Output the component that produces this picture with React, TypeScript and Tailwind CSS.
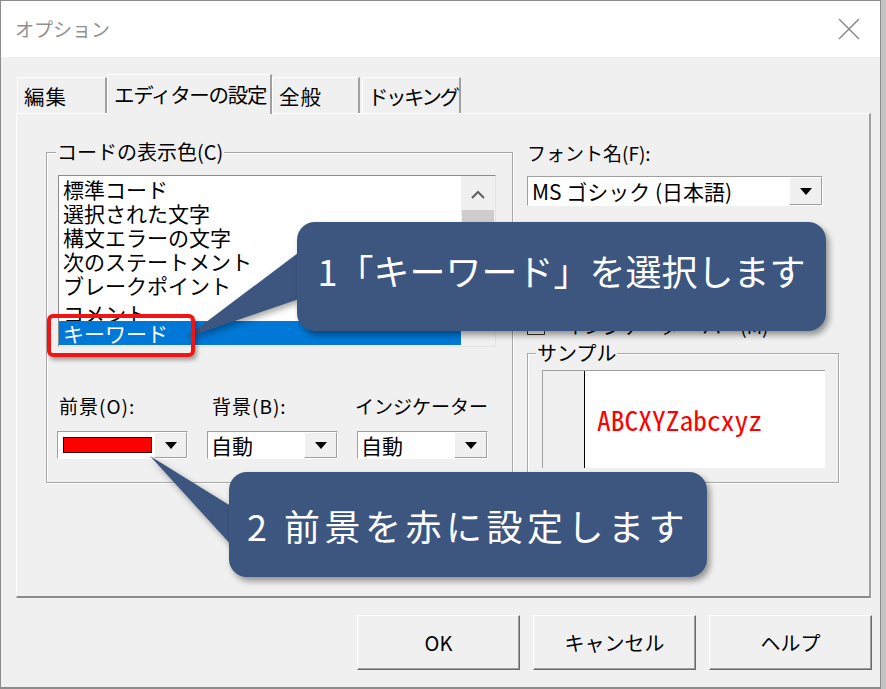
import React from "react";

const items = ["標準コード", "選択された文字", "構文エラーの文字", "次のステートメント", "ブレークポイント"];

function Triangle() {
  return (
    <svg width="12" height="7" viewBox="0 0 12 7">
      <path d="M0 0h12L6 7z" fill="#000" />
    </svg>
  );
}

function DropButton({ className = "" }: { className?: string }) {
  return (
    <div
      className={`flex items-center justify-center bg-[#f0f0f0] border border-t-white border-l-white border-r-[#a0a0a0] border-b-[#a0a0a0] ${className}`}
    >
      <Triangle />
    </div>
  );
}

function ColorSelect({ children }: { children: React.ReactNode }) {
  return (
    <div className="flex h-[28px] w-[131px] items-stretch border border-t-[#a0a0a0] border-l-[#a0a0a0] border-r-white border-b-white bg-white">
      <div className="flex flex-1 items-center pl-[3px] text-[21px] leading-[26px]">{children}</div>
      <DropButton className="w-[33px]" />
    </div>
  );
}

function Tab({ label, className }: { label: string; className: string }) {
  return (
    <div
      className={`flex items-center whitespace-nowrap bg-[#f0f0f0] border-t border-l border-t-white border-l-white border-r-2 border-r-[#a0a0a0] text-[20.5px] leading-none text-black ${className}`}
    >
      {label}
    </div>
  );
}

function WinButton({ label }: { label: string }) {
  return (
    <div className="flex h-[55px] w-[163px] items-center justify-center border border-t-white border-l-white border-r-[#696969] border-b-[#696969] bg-[#f0f0f0] shadow-[inset_-1px_-1px_0_#a0a0a0] text-[20px] text-black">
      {label}
    </div>
  );
}

export default function App() {
  return (
    <div className="relative h-[689px] w-[886px] overflow-hidden bg-[#c4c4c4] font-['Noto_Sans_CJK_JP',sans-serif] text-black">
      <div className="flex h-[689px] w-[881px] flex-col border-t border-l border-r border-b-2 border-[#8c8c8c] bg-[#f0f0f0]">
        {/* title bar */}
        <div className="flex h-[56px] items-center justify-between bg-white pl-[14px] pr-[20px]">
          <span className="text-[19px] text-[#8f8f8f]">オプション</span>
          <svg width="22" height="22" viewBox="0 0 22 22">
            <path d="M1 1L21 21M21 1L1 21" stroke="#8a8a8a" strokeWidth="1.5" />
          </svg>
        </div>

        {/* tabs */}
        <div className="mt-[17px] flex h-[39px] items-end pl-[16px]">
          <Tab label="編集" className="h-[36px] w-[90px] pl-[6px] pt-[2px] tracking-[1px]" />
          <Tab label="エディターの設定" className="relative z-10 h-[40px] -mb-px w-[165px] pl-[6px] tracking-[-1.3px]" />
          <Tab label="全般" className="h-[36px] w-[88px] pl-[6px] pt-[2px] tracking-[1px]" />
          <Tab label="ドッキング" className="ml-[2px] h-[36px] w-[99px] pl-[5px] pt-[2px] tracking-[-2.5px]" />
        </div>

        {/* panel */}
        <div className="ml-[15px] flex h-[485px] w-[855px] items-start border-t border-l border-t-white border-l-white border-r-2 border-b-2 border-r-[#a0a0a0] border-b-[#8a8a8a]">
          {/* code colour group */}
          <div className="relative ml-[29px] mt-[38px] h-[331px] w-[467px] border border-[#a8a8a8] shadow-[inset_1px_1px_0_#fff,1px_1px_0_#fff]">
            <span className="absolute -top-[13px] left-[9px] bg-[#f0f0f0] px-[1px] text-[20px] leading-[24px]">
              コードの表示色(C)
            </span>
            <div className="ml-[11px] mt-[22px] flex h-[172px] w-[438px] border border-t-[#8c8c8c] border-l-[#8c8c8c] border-r-[#e3e3e3] border-b-[#e3e3e3] bg-white">
              <div className="flex w-[402px] flex-col pt-px">
                {items.map((t) => (
                  <div key={t} className="h-[24px] pl-[4px] text-[21px] leading-[24px]">
                    {t}
                  </div>
                ))}
                <div className="h-[24px] overflow-hidden pl-[4px] pt-[4px] text-[21px] leading-[24px]">コメント</div>
                <div className="h-[24px] bg-[#0078d7] pl-[4px] text-[21px] leading-[24px] text-white">キーワード</div>
              </div>
              <div className="flex w-[34px] flex-col items-center bg-[#f0f0f0]">
                <svg className="mt-[14px]" width="14" height="9" viewBox="0 0 14 9">
                  <path d="M1 8L7 2l6 6" stroke="#606060" strokeWidth="2" fill="none" />
                </svg>
                <div className="mt-[11px] h-[88px] w-[32px] bg-[#cdcdcd]" />
                <svg className="mt-[18px]" width="14" height="9" viewBox="0 0 14 9">
                  <path d="M1 1l6 6 6-6" stroke="#606060" strokeWidth="2" fill="none" />
                </svg>
              </div>
            </div>

            <div className="ml-[10px] mt-[47px] grid grid-cols-[131px_131px_131px] gap-x-[19px] gap-y-[13px] text-[19px] leading-[24px]">
              <span className="pl-[2px] tracking-[1px]">前景(O):</span>
              <span className="pl-[5px] tracking-[1px]">背景(B):</span>
              <span className="-ml-[2px] whitespace-nowrap">インジケーター</span>
              <ColorSelect>
                <div className="ml-[2px] h-[16px] w-[89px] border border-[#3a0000] bg-[#ff0000]" />
              </ColorSelect>
              <ColorSelect>自動</ColorSelect>
              <ColorSelect>自動</ColorSelect>
            </div>
          </div>

          {/* right column */}
          <div className="ml-[14px] mt-[27px] flex w-[313px] flex-col">
            <span className="text-[19px] leading-[24px]">フォント名(F):</span>
            <div className="mt-[11px] flex h-[30px] w-[296px] border border-t-[#a0a0a0] border-l-[#a0a0a0] border-r-white border-b-white bg-white">
              <div className="flex flex-1 items-center pl-[4px] text-[21px] leading-[28px]">MS ゴシック (日本語)</div>
              <DropButton className="w-[33px]" />
            </div>

            <div className="mt-[108px] flex h-[24px] items-center gap-[20px]">
              <div className="flex h-[18px] w-[18px] items-center justify-center border border-[#333] bg-white">
                <svg width="12" height="10" viewBox="0 0 12 10">
                  <path d="M1 5l3.5 3.5L11 1" stroke="#000" strokeWidth="1.6" fill="none" />
                </svg>
              </div>
              <span className="text-[19px] leading-[24px]">インジケーター バー(M)</span>
            </div>

            <div className="relative mt-[15px] h-[130px] w-[312px] border border-[#a8a8a8] shadow-[inset_1px_1px_0_#fff,1px_1px_0_#fff]">
              <span className="absolute -top-[13px] left-[8px] bg-[#f0f0f0] px-[1px] text-[20px] leading-[24px]">サンプル</span>
              <div className="ml-[14px] mt-[16px] flex h-[98px] w-[283px] border-t border-l border-[#a0a0a0]">
                <div className="w-[41px] bg-[#f0f0f0]" />
                <div className="w-px bg-black" />
                <div className="flex flex-1 items-center bg-white pl-[12px] font-['Noto_Sans_Mono_CJK_JP','DejaVu_Sans_Mono',monospace] text-[27.5px] leading-none text-[#ff0000]">
                  ABCXYZabcxyz
                </div>
              </div>
            </div>
          </div>
        </div>

        {/* buttons */}
        <div className="mt-[17px] flex justify-end gap-[13px] pr-[8px]">
          <WinButton label="OK" />
          <WinButton label="キャンセル" />
          <WinButton label="ヘルプ" />
        </div>
      </div>

      {/* callout tails */}
      <svg className="absolute left-0 top-0 drop-shadow-[2px_3px_3px_rgba(0,0,0,0.35)]" width="886" height="689">
        <polygon points="302,250 302,298 185,338" fill="#3d5680" />
        <polygon points="234,508 234,548 150,456" fill="#3d5680" />
      </svg>

      {/* red highlight */}
      <div className="absolute left-[47px] top-[314px] h-[43px] w-[148px] rounded-[6px] border-[4px] border-[#f01414] shadow-[2px_3px_4px_rgba(0,0,0,0.35)]" />

      {/* callout 1 */}
      <div className="absolute left-[297px] top-[222px] flex h-[109px] w-[529px] items-center justify-center rounded-[18px] bg-[#3d5680] pb-[14px] shadow-[3px_4px_6px_rgba(0,0,0,0.4)]">
        <span className="text-[36px] leading-none text-white">1「キーワード」を選択します</span>
      </div>

      {/* callout 2 */}
      <div className="absolute left-[229px] top-[472px] flex h-[105px] w-[478px] items-center justify-center rounded-[18px] bg-[#3d5680] shadow-[3px_4px_6px_rgba(0,0,0,0.4)]">
        <span className="text-[36px] leading-none tracking-[4.5px] text-white">2 前景を赤に設定します</span>
      </div>
    </div>
  );
}
